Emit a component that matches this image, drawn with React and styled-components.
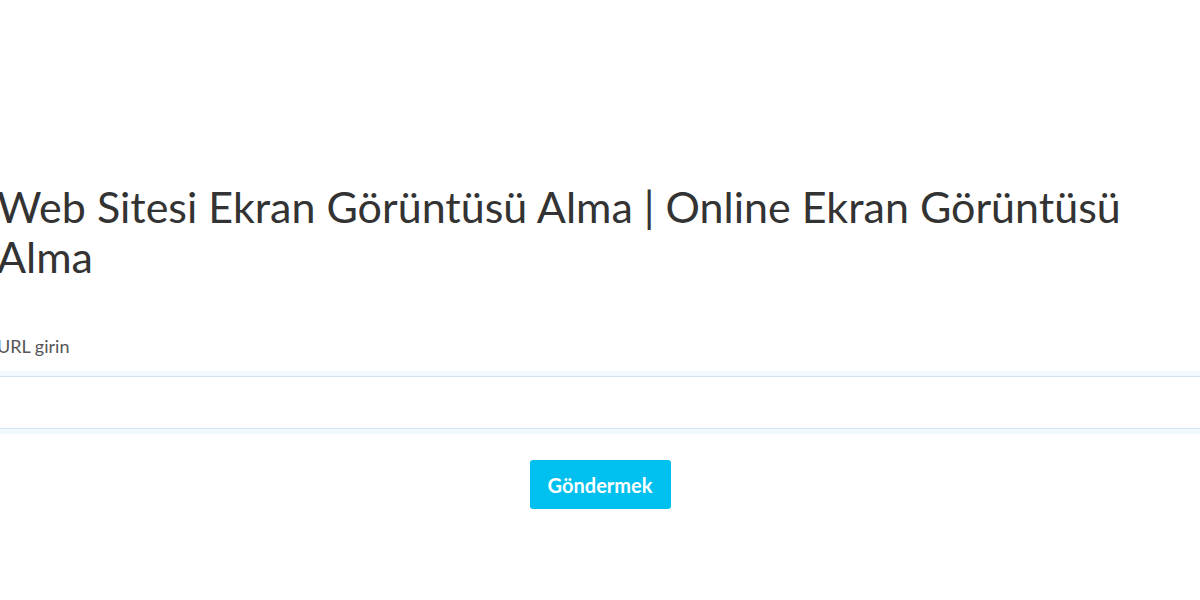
import React from "react";
import styled, { createGlobalStyle } from "styled-components";

const GlobalStyle = createGlobalStyle`
  html, body {
    margin: 0;
    background: #fff;
    overflow: hidden;
  }
  body {
    font-family: Lato, "Noto Sans", sans-serif;
    color: #333;
  }
`;

const Page = styled.div`
  display: flex;
  justify-content: center;
  width: 100vw;
  height: 600px;
  overflow: hidden;
`;

const Container = styled.div`
  flex: 0 0 1206px;
  padding-top: 182px;
`;

const Title = styled.h1`
  margin: 0 0 53px;
  font-size: 43px;
  font-weight: 400;
  line-height: 50px;
  color: #333;
`;

const Form = styled.form`
  display: flex;
  flex-direction: column;
`;

const Label = styled.label`
  font-size: 18px;
  line-height: 22px;
  color: #555;
  margin-bottom: 19px;
`;

const Input = styled.input`
  box-sizing: border-box;
  height: 53px;
  margin: 0 -20px;
  border: 1px solid #cfe6f2;
  box-shadow: 0 0 0 5px #f0f9fd;
  outline: none;
  font: inherit;
  padding: 0 20px;
`;

const Actions = styled.div`
  display: flex;
  justify-content: center;
  margin-top: 31px;
`;

const Button = styled.button`
  width: 141px;
  height: 49px;
  border: none;
  border-radius: 3px;
  background: #00c0ef;
  color: #fff;
  font-family: inherit;
  font-size: 20px;
  font-weight: 700;
  cursor: pointer;
`;

export default function App() {
  return (
    <>
      <GlobalStyle />
      <Page>
        <Container>
          <Title>Web Sitesi Ekran Görüntüsü Alma | Online Ekran Görüntüsü Alma</Title>
          <Form onSubmit={(e) => e.preventDefault()}>
            <Label htmlFor="url">URL girin</Label>
            <Input id="url" type="text" />
            <Actions>
              <Button type="submit">Göndermek</Button>
            </Actions>
          </Form>
        </Container>
      </Page>
    </>
  );
}
